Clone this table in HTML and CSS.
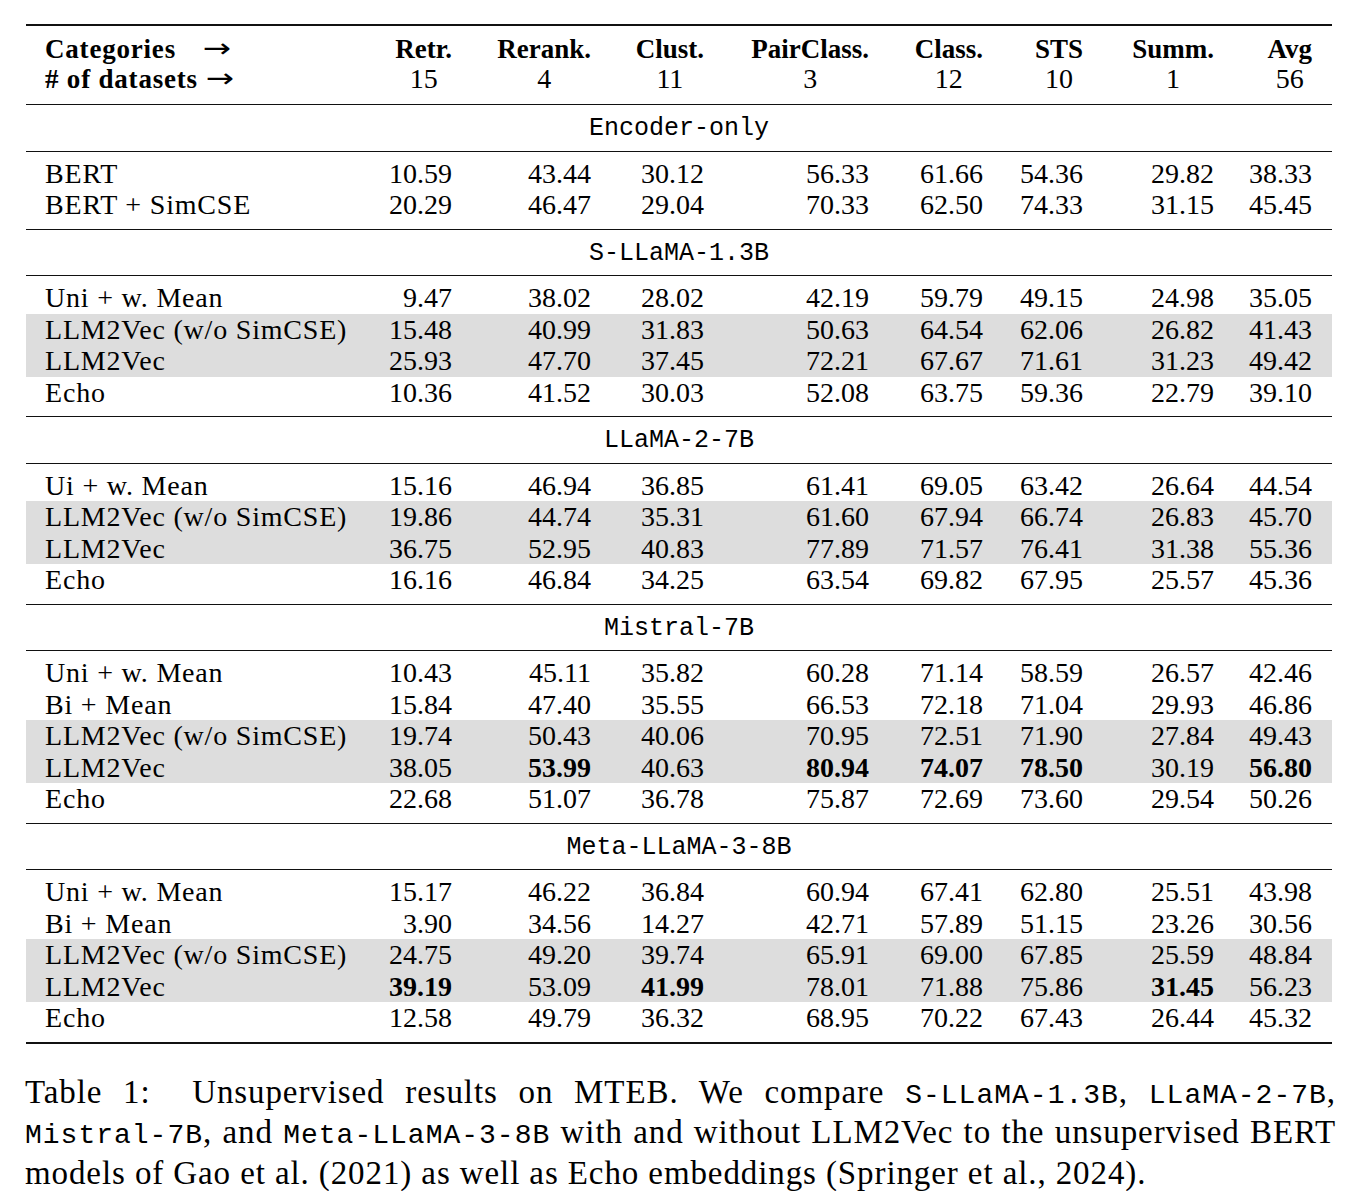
FILE: index.html
```html
<!DOCTYPE html>
<html>
<head>
<meta charset="utf-8">
<link rel="stylesheet" href="styles.css">
</head>
<body>
<div class="page">
<table class="results">
<colgroup>
<col class="c0"><col class="c1"><col class="c2"><col class="c3"><col class="c4"><col class="c5"><col class="c6"><col class="c7"><col class="c8">
</colgroup>
<thead>
<tr>
<th class="lab"><div class="hl">Categories<span class="arr arr1">→</span></div><div class="hl"># of datasets<span class="arr arr2">→</span></div></th>
<th><span class="hc"><span class="hl">Retr.</span><span class="hn">15</span></span></th>
<th><span class="hc"><span class="hl">Rerank.</span><span class="hn">4</span></span></th>
<th><span class="hc"><span class="hl">Clust.</span><span class="hn">11</span></span></th>
<th><span class="hc"><span class="hl">PairClass.</span><span class="hn">3</span></span></th>
<th><span class="hc"><span class="hl">Class.</span><span class="hn">12</span></span></th>
<th><span class="hc"><span class="hl">STS</span><span class="hn">10</span></span></th>
<th><span class="hc"><span class="hl">Summ.</span><span class="hn">1</span></span></th>
<th class="lastcol"><span class="hc"><span class="hl">Avg</span><span class="hn">56</span></span></th>
</tr>
</thead>
<tbody>
<tr class="sec"><td colspan="9">Encoder-only</td></tr>
<tr class="first"><td>BERT</td><td>10.59</td><td>43.44</td><td>30.12</td><td>56.33</td><td>61.66</td><td>54.36</td><td>29.82</td><td>38.33</td></tr>
<tr class="last"><td>BERT + SimCSE</td><td>20.29</td><td>46.47</td><td>29.04</td><td>70.33</td><td>62.50</td><td>74.33</td><td>31.15</td><td>45.45</td></tr>

<tr class="sec"><td colspan="9">S-LLaMA-1.3B</td></tr>
<tr class="first"><td>Uni + w. Mean</td><td>9.47</td><td>38.02</td><td>28.02</td><td>42.19</td><td>59.79</td><td>49.15</td><td>24.98</td><td>35.05</td></tr>
<tr class="hi"><td>LLM2Vec (w/o SimCSE)</td><td>15.48</td><td>40.99</td><td>31.83</td><td>50.63</td><td>64.54</td><td>62.06</td><td>26.82</td><td>41.43</td></tr>
<tr class="hi"><td>LLM2Vec</td><td>25.93</td><td>47.70</td><td>37.45</td><td>72.21</td><td>67.67</td><td>71.61</td><td>31.23</td><td>49.42</td></tr>
<tr class="last"><td>Echo</td><td>10.36</td><td>41.52</td><td>30.03</td><td>52.08</td><td>63.75</td><td>59.36</td><td>22.79</td><td>39.10</td></tr>

<tr class="sec"><td colspan="9">LLaMA-2-7B</td></tr>
<tr class="first"><td>Ui + w. Mean</td><td>15.16</td><td>46.94</td><td>36.85</td><td>61.41</td><td>69.05</td><td>63.42</td><td>26.64</td><td>44.54</td></tr>
<tr class="hi"><td>LLM2Vec (w/o SimCSE)</td><td>19.86</td><td>44.74</td><td>35.31</td><td>61.60</td><td>67.94</td><td>66.74</td><td>26.83</td><td>45.70</td></tr>
<tr class="hi"><td>LLM2Vec</td><td>36.75</td><td>52.95</td><td>40.83</td><td>77.89</td><td>71.57</td><td>76.41</td><td>31.38</td><td>55.36</td></tr>
<tr class="last"><td>Echo</td><td>16.16</td><td>46.84</td><td>34.25</td><td>63.54</td><td>69.82</td><td>67.95</td><td>25.57</td><td>45.36</td></tr>

<tr class="sec"><td colspan="9">Mistral-7B</td></tr>
<tr class="first"><td>Uni + w. Mean</td><td>10.43</td><td>45.11</td><td>35.82</td><td>60.28</td><td>71.14</td><td>58.59</td><td>26.57</td><td>42.46</td></tr>
<tr><td>Bi + Mean</td><td>15.84</td><td>47.40</td><td>35.55</td><td>66.53</td><td>72.18</td><td>71.04</td><td>29.93</td><td>46.86</td></tr>
<tr class="hi"><td>LLM2Vec (w/o SimCSE)</td><td>19.74</td><td>50.43</td><td>40.06</td><td>70.95</td><td>72.51</td><td>71.90</td><td>27.84</td><td>49.43</td></tr>
<tr class="hi"><td>LLM2Vec</td><td>38.05</td><td><b>53.99</b></td><td>40.63</td><td><b>80.94</b></td><td><b>74.07</b></td><td><b>78.50</b></td><td>30.19</td><td><b>56.80</b></td></tr>
<tr class="last"><td>Echo</td><td>22.68</td><td>51.07</td><td>36.78</td><td>75.87</td><td>72.69</td><td>73.60</td><td>29.54</td><td>50.26</td></tr>

<tr class="sec"><td colspan="9">Meta-LLaMA-3-8B</td></tr>
<tr class="first"><td>Uni + w. Mean</td><td>15.17</td><td>46.22</td><td>36.84</td><td>60.94</td><td>67.41</td><td>62.80</td><td>25.51</td><td>43.98</td></tr>
<tr><td>Bi + Mean</td><td>3.90</td><td>34.56</td><td>14.27</td><td>42.71</td><td>57.89</td><td>51.15</td><td>23.26</td><td>30.56</td></tr>
<tr class="hi"><td>LLM2Vec (w/o SimCSE)</td><td>24.75</td><td>49.20</td><td>39.74</td><td>65.91</td><td>69.00</td><td>67.85</td><td>25.59</td><td>48.84</td></tr>
<tr class="hi"><td>LLM2Vec</td><td><b>39.19</b></td><td>53.09</td><td><b>41.99</b></td><td>78.01</td><td>71.88</td><td>75.86</td><td><b>31.45</b></td><td>56.23</td></tr>
<tr class="last end"><td>Echo</td><td>12.58</td><td>49.79</td><td>36.32</td><td>68.95</td><td>70.22</td><td>67.43</td><td>26.44</td><td>45.32</td></tr>
</tbody>
</table>

<div class="caption">
<span class="cl just">Table 1:&nbsp; Unsupervised results on MTEB. We compare <code>S-LLaMA-1.3B</code>, <code>LLaMA-2-7B</code>,</span>
<span class="cl just"><code>Mistral-7B</code>, and <code>Meta-LLaMA-3-8B</code> with and without LLM2Vec to the unsupervised BERT</span>
<span class="cl">models of Gao et al. (2021) as well as Echo embeddings (Springer et al., 2024).</span>
</div>
</div>
</body>
</html>
```

FILE: styles.css
```css
html, body {
  margin: 0;
  padding: 0;
  background: #ffffff;
}

body {
  color: #000;
  font-family: "Liberation Serif", "Times New Roman", serif;
}

.page {
  padding: 24px 0 0 26px;
  width: 1311px;
}

.results {
  width: 1306px;
  table-layout: fixed;
  border-collapse: separate;
  border-spacing: 0;
  font-size: 28px;
}

.c0 { width: 346px; }
.c1 { width: 80px; }
.c2 { width: 139px; }
.c3 { width: 113px; }
.c4 { width: 165px; }
.c5 { width: 114px; }
.c6 { width: 100px; }
.c7 { width: 131px; }
.c8 { width: 118px; }

.results th {
  border-top: 2px solid #111;
  border-bottom: 1px solid #111;
  padding: 8px 0 10px 0;
  text-align: right;
  vertical-align: top;
  font-weight: normal;
  line-height: 30px;
  font-size: 27px;
}

.results th.lab {
  text-align: left;
  padding-left: 19px;
  font-weight: bold;
  letter-spacing: 0.8px;
}

.results th.lastcol,
.results td:last-child {
  padding-right: 20px;
}

.hc {
  display: inline-flex;
  flex-direction: column;
  align-items: center;
}

.hl {
  font-weight: bold;
  white-space: nowrap;
  height: 30px;
}

.hn {
  font-weight: normal;
  font-size: 28px;
}

.arr {
  font-family: "DejaVu Sans", sans-serif;
  font-weight: normal;
  font-size: 26px;
  line-height: 20px;
  letter-spacing: 0;
  display: inline-block;
  vertical-align: 1px;
  transform: scaleX(1.3);
  transform-origin: left center;
}

.arr1 {
  margin-left: 27px;
}

.arr2 {
  margin-left: 8px;
}

.results td {
  padding: 0;
  text-align: right;
  line-height: 31.5px;
  white-space: nowrap;
}

.results td:first-child {
  text-align: left;
  padding-left: 19px;
  letter-spacing: 0.8px;
}

.results tr.sec td {
  text-align: center;
  padding: 2px 0 0 0;
  font-family: "Liberation Mono", "DejaVu Sans Mono", monospace;
  font-size: 25px;
  letter-spacing: 0;
  line-height: 43.5px;
  border-bottom: 1px solid #111;
}

.results tr.first td {
  padding-top: 6px;
}

.results tr.last td {
  padding-bottom: 8px;
  border-bottom: 1px solid #111;
}

.results tr.end td {
  border-bottom: 2px solid #111;
}

.results tr.hi td {
  background: #dddddd;
}

.results b {
  font-weight: bold;
}

.caption {
  margin-top: 30px;
  width: 1311px;
  margin-left: -1px;
  font-size: 33px;
  line-height: 36.5px;
  letter-spacing: 0.9px;
}

.cl {
  display: block;
  white-space: nowrap;
}

.cl.just {
  text-align: justify;
  text-align-last: justify;
  white-space: normal;
}

.caption code {
  font-family: "Liberation Mono", "DejaVu Sans Mono", monospace;
  font-size: 28px;
  letter-spacing: 1px;
}
```
